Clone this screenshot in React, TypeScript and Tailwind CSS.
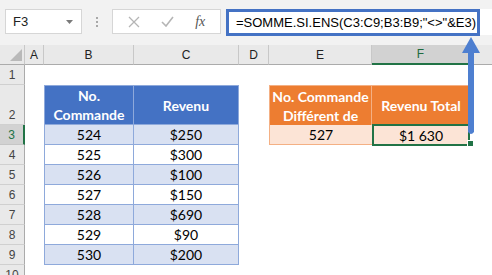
import React from "react";

const BLUE_TINT = "bg-[#d9e1f2]";

const blueRows = [
  { n: 3, a: "524", b: "$250", tint: true },
  { n: 4, a: "525", b: "$300", tint: false },
  { n: 5, a: "526", b: "$100", tint: true },
  { n: 6, a: "527", b: "$150", tint: false },
  { n: 7, a: "528", b: "$690", tint: true },
  { n: 8, a: "529", b: "$90", tint: false },
  { n: 9, a: "530", b: "$200", tint: true },
];

function RowHead({ n, selected }: { n: number; selected?: boolean }) {
  return (
    <div
      className={
        selected
          ? "w-[25px] shrink-0 flex items-end justify-center pb-[2px] bg-[#d2d2d2] border-b border-[#c6c6c6] border-r-2 border-r-[#217346] text-[#217346]"
          : "w-[25px] shrink-0 flex items-end justify-center pb-[2px] bg-[#e9e9e9] border-b border-[#d0d0d0] border-r border-r-[#ababab] text-[#444]"
      }
    >
      <span className="font-['Liberation_Sans',Arial,sans-serif] text-[12px] leading-[14px]">{n}</span>
    </div>
  );
}

function ColHead({ label, w, selected }: { label: string; w: string; selected?: boolean }) {
  return (
    <div
      className={
        (selected
          ? "bg-[#d2d2d2] border-b-2 border-b-[#217346] text-[#1e6b3e] "
          : "border-b border-b-[#ababab] text-[#222] ") +
        "shrink-0 h-full flex items-center justify-center border-r border-r-[#c8c8c8] font-['Liberation_Sans',Arial,sans-serif] text-[12px] " +
        w
      }
    >
      {label}
    </div>
  );
}

export default function App() {
  return (
    <div className="relative w-[492px] h-[275px] overflow-hidden bg-white font-['Lato',sans-serif] text-[14px] text-black">
      {/* formula bar */}
      <div className="h-[45px] bg-[#f2f2f2] flex items-start pt-[9px]">
        <div className="ml-[5px] w-[77px] h-[25px] bg-white border border-[#d6d6d6] flex items-center justify-between pl-[7px] pr-[8px]">
          <span className="font-['Liberation_Sans',Arial,sans-serif] text-[13px] text-[#222]">F3</span>
          <svg width="7" height="4" viewBox="0 0 7 4">
            <path d="M0 0 L7 0 L3.5 4 Z" fill="#7a7a7a" />
          </svg>
        </div>
        <div className="w-[30px] h-[25px] flex flex-col items-center justify-center gap-[2px]">
          <div className="w-[2px] h-[2px] bg-[#a8a8a8]" />
          <div className="w-[2px] h-[2px] bg-[#a8a8a8]" />
          <div className="w-[2px] h-[2px] bg-[#a8a8a8]" />
        </div>
        <div className="w-[109px] h-[25px] bg-white border border-[#d6d6d6] flex items-center justify-around px-[4px]">
          <svg width="12" height="12" viewBox="0 0 12 12">
            <path d="M1 1 L11 11 M11 1 L1 11" stroke="#b5b5b5" strokeWidth="1.3" />
          </svg>
          <svg width="13" height="11" viewBox="0 0 13 11">
            <path d="M1 6 L5 10 L12 1" stroke="#b5b5b5" strokeWidth="1.6" fill="none" />
          </svg>
          <span className="font-['Liberation_Serif',serif] italic text-[14px] text-[#555]">fx</span>
        </div>
        <div className="ml-[5px] flex-1 h-[26px] bg-white">
          <div className="w-[254px] h-[27px] border-[3px] border-[#4472c4] flex items-center pl-[7px] font-['Liberation_Sans',Arial,sans-serif] text-[13px] text-black whitespace-nowrap">
            =SOMME.SI.ENS(C3:C9;B3:B9;"&lt;&gt;"&amp;E3)
          </div>
        </div>
      </div>

      {/* column headers */}
      <div className="h-[20px] flex bg-[#e9e9e9]">
        <div className="w-[25px] shrink-0 h-full border-r border-r-[#c8c8c8] border-b border-b-[#ababab] relative">
          <svg className="absolute right-[2px] bottom-[3px]" width="12" height="12" viewBox="0 0 12 12">
            <path d="M0 12 L12 12 L12 0 Z" fill="#b9b9b9" />
          </svg>
        </div>
        <ColHead label="A" w="w-[19px]" />
        <ColHead label="B" w="w-[90px]" />
        <ColHead label="C" w="w-[105px]" />
        <ColHead label="D" w="w-[30px]" />
        <ColHead label="E" w="w-[103px]" />
        <ColHead label="F" w="w-[98px]" selected />
        <div className="flex-1 h-full border-b border-b-[#ababab]" />
      </div>

      {/* row 1 */}
      <div className="h-[20px] flex">
        <RowHead n={1} />
      </div>

      {/* row 2 : headers */}
      <div className="h-[40px] flex">
        <RowHead n={2} />
        <div className="w-[19px] shrink-0" />
        <div className="w-[90px] shrink-0 bg-[#4472c4] border-l border-t border-r border-b border-[#8ea9db] flex items-center justify-center text-center text-white font-bold leading-[19px]">
          No.
          <br />
          Commande
        </div>
        <div className="w-[105px] shrink-0 bg-[#4472c4] border-t border-r border-b border-[#8ea9db] flex items-center justify-center text-white font-bold">
          Revenu
        </div>
        <div className="w-[30px] shrink-0" />
        <div className="w-[103px] shrink-0 bg-[#ed7d31] border-l border-t border-r border-[#f4b084] flex items-center justify-center text-center text-white font-bold leading-[19px]">
          No. Commande
          <br />
          Différent de
        </div>
        <div className="w-[98px] shrink-0 bg-[#ed7d31] border-t border-[#f4b084] flex items-center justify-center text-white font-bold">
          Revenu Total
        </div>
      </div>

      {/* rows 3-9 */}
      {blueRows.map((r) => (
        <div key={r.n} className="h-[20px] flex">
          <RowHead n={r.n} selected={r.n === 3} />
          <div className="w-[19px] shrink-0" />
          <div
            className={
              (r.tint ? BLUE_TINT : "bg-white") +
              " w-[90px] shrink-0 border-l border-r border-b border-[#8ea9db] flex items-center justify-center"
            }
          >
            {r.a}
          </div>
          <div
            className={
              (r.tint ? BLUE_TINT : "bg-white") +
              " w-[105px] shrink-0 border-r border-b border-[#8ea9db] flex items-center justify-center"
            }
          >
            {r.b}
          </div>
          {r.n === 3 && (
            <>
              <div className="w-[30px] shrink-0" />
              <div className="w-[103px] shrink-0 bg-[#fce4d6] border-l border-b border-[#f4b084] flex items-center justify-center">
                527
              </div>
              <div className="w-[98px] shrink-0 -mt-[1px] h-[22px] bg-[#fce4d6] border-2 border-[#217346] flex items-center justify-center">
                $1 630
              </div>
            </>
          )}
        </div>
      ))}

      {/* row 10 */}
      <div className="h-[20px] flex">
        <RowHead n={10} />
      </div>

      {/* fill handle */}
      <div className="absolute left-[467px] top-[140px] w-[7px] h-[7px] bg-[#217346] border border-white" />

      {/* arrow from F3 to formula */}
      <svg className="absolute left-[460px] top-[35px]" width="22" height="102" viewBox="0 0 22 102">
        <path d="M8 17 L8 97 Q11 101 14 97 L14 17 Z" fill="#4e7fd0" />
        <path d="M2 18 L11 2 L20 18 Z" fill="#4e7fd0" />
      </svg>
    </div>
  );
}
